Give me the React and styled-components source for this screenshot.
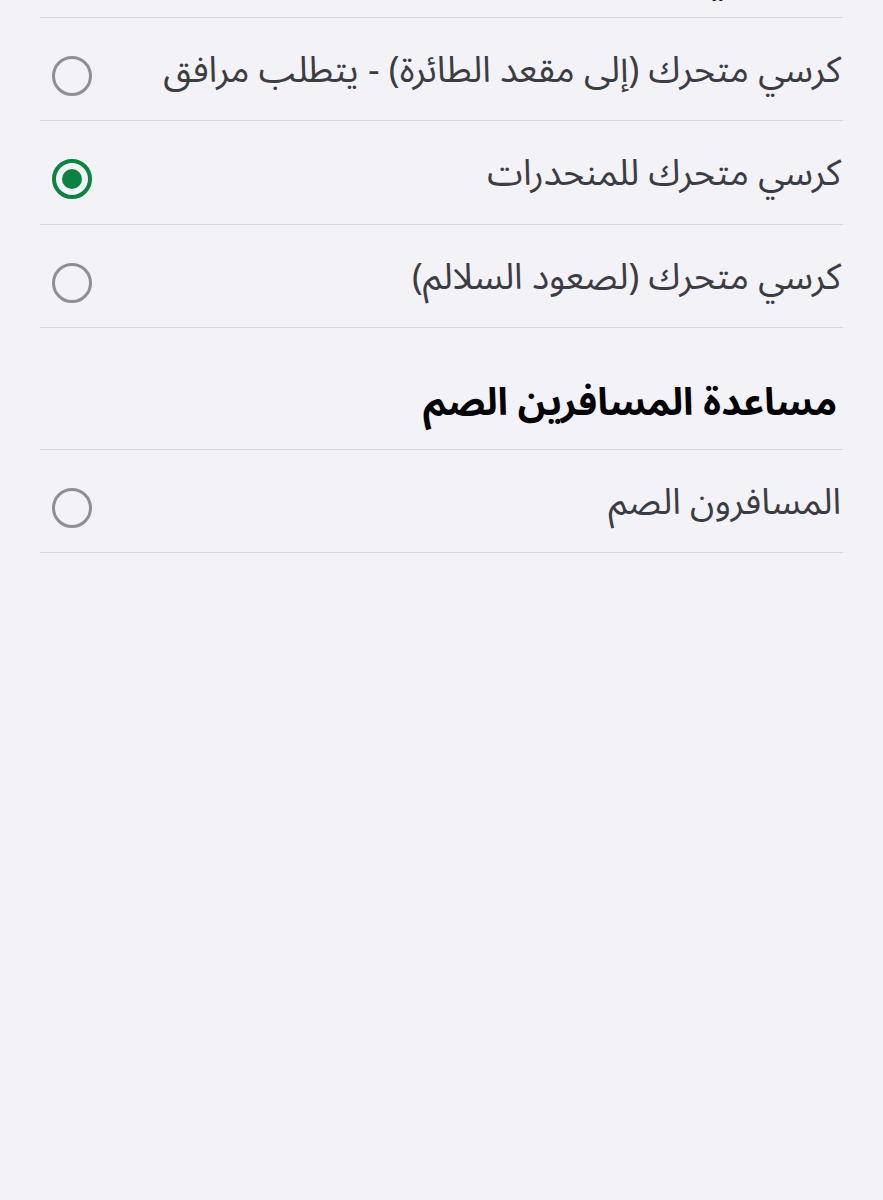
import React, { useState } from 'react';
import styled, { createGlobalStyle } from 'styled-components';

const GlobalStyle = createGlobalStyle`
    html, body {
        margin: 0;
        padding: 0;
        background: #f2f2f7;
    }
    body {
        font-family: "Noto Sans Arabic", "Noto Sans", "DejaVu Sans", sans-serif;
        overflow: hidden;
    }
`;

const sections = [
    {
        title: 'الكراسي المتحركة',
        options: [
            'كرسي متحرك (إلى مقعد الطائرة) - يتطلب مرافق',
            'كرسي متحرك للمنحدرات',
            'كرسي متحرك (لصعود السلالم)',
        ],
    },
    {
        title: 'مساعدة المسافرين الصم',
        options: ['المسافرون الصم'],
    },
];

const App = () => {
    const [selected, setSelected] = useState('كرسي متحرك للمنحدرات');

    return (
        <>
            <GlobalStyle />
            <Page dir="rtl">
                {sections.map(section => (
                    <Section key={section.title}>
                        <SectionTitle>{section.title}</SectionTitle>
                        {section.options.map(option => (
                            <OptionRow key={option} onClick={() => setSelected(option)}>
                                <OptionLabel>{option}</OptionLabel>
                                <Radio checked={selected === option} />
                            </OptionRow>
                        ))}
                    </Section>
                ))}
            </Page>
        </>
    );
};

export default App;

/** styled components */
const Page = styled.div`
    display: flex;
    flex-direction: column;
    margin-top: -104px;
    padding: 0 40px;
`;

const Section = styled.section`
    display: flex;
    flex-direction: column;
`;

const SectionTitle = styled.h2`
    margin: 0;
    height: 121.5px;
    display: flex;
    align-items: flex-end;
    padding: 0 6px 6px 0;
    box-sizing: border-box;
    font-size: 38px;
    font-weight: 700;
    color: #000;
    border-bottom: 1px solid #d8d8dc;
`;

const OptionRow = styled.label`
    display: flex;
    align-items: center;
    justify-content: space-between;
    height: 103.6px;
    padding-top: 14px;
    box-sizing: border-box;
    border-bottom: 1px solid #d8d8dc;
    cursor: pointer;
`;

const OptionLabel = styled.span`
    padding-right: 2px;
    margin-top: -10px;
    font-size: 36px;
    color: #3c3c43;
`;

const Radio = styled.span`
    position: relative;
    flex: none;
    width: 40px;
    height: 40px;
    margin-left: 12px;
    box-sizing: border-box;
    border-radius: 50%;
    border: ${props => (props.checked ? '4px solid #0a8541' : '3px solid #8e8e93')};
    &::after {
        content: "";
        display: ${props => (props.checked ? 'block' : 'none')};
        position: absolute;
        top: 50%;
        left: 50%;
        width: 20px;
        height: 20px;
        border-radius: 50%;
        background: #0a8541;
        transform: translate(-50%, -50%);
    }
`;
